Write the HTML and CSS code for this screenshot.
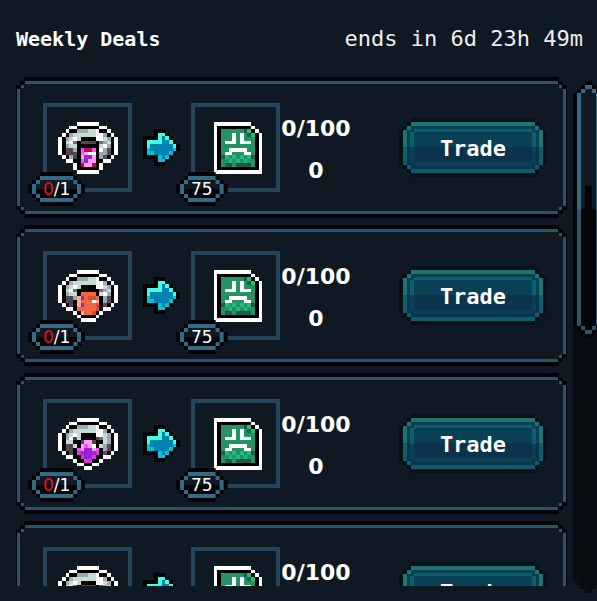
FILE: index.html
```html
<!DOCTYPE html>
<html lang="en">
<head>
<meta charset="utf-8">
<title>Weekly Deals</title>
<link rel="stylesheet" href="styles.css">
</head>
<body>
<header class="head">
  <h1 class="title">Weekly Deals</h1>
  <p class="timer">ends in 6d 23h 49m</p>
</header>
<main class="body">
  <ul class="deals" id="deals"></ul>
  <div class="track"><div class="thumb frame"></div></div>
</main>
<script src="app.js"></script>
</body>
</html>
```
FILE: styles.css
```css
:root {
  --bg: #0f1923;
  --ink: #050208;
  --line: #28556a;
  --pill: #316c82;
  --step1: polygon(4px 0, calc(100% - 4px) 0, calc(100% - 4px) 4px, 100% 4px, 100% calc(100% - 4px), calc(100% - 4px) calc(100% - 4px), calc(100% - 4px) 100%, 4px 100%, 4px calc(100% - 4px), 0 calc(100% - 4px), 0 4px, 4px 4px);
  --step2: polygon(8px 0, calc(100% - 8px) 0, calc(100% - 8px) 4px, calc(100% - 4px) 4px, calc(100% - 4px) 8px, 100% 8px, 100% calc(100% - 8px), calc(100% - 4px) calc(100% - 8px), calc(100% - 4px) calc(100% - 4px), calc(100% - 8px) calc(100% - 4px), calc(100% - 8px) 100%, 8px 100%, 8px calc(100% - 4px), 4px calc(100% - 4px), 4px calc(100% - 8px), 0 calc(100% - 8px), 0 8px, 4px 8px, 4px 4px, 8px 4px);
  --step3: polygon(12px 0, calc(100% - 12px) 0, calc(100% - 12px) 4px, calc(100% - 8px) 4px, calc(100% - 8px) 8px, calc(100% - 4px) 8px, calc(100% - 4px) 12px, 100% 12px, 100% calc(100% - 12px), calc(100% - 4px) calc(100% - 12px), calc(100% - 4px) calc(100% - 8px), calc(100% - 8px) calc(100% - 8px), calc(100% - 8px) calc(100% - 4px), calc(100% - 12px) calc(100% - 4px), calc(100% - 12px) 100%, 12px 100%, 12px calc(100% - 4px), 8px calc(100% - 4px), 8px calc(100% - 8px), 4px calc(100% - 8px), 4px calc(100% - 12px), 0 calc(100% - 12px), 0 12px, 4px 12px, 4px 8px, 8px 8px, 8px 4px, 12px 4px);
}

* { box-sizing: border-box; }

body {
  margin: 0;
  height: 100vh;
  padding-bottom: 15px;
  display: flex;
  flex-direction: column;
  overflow: hidden;
  background: var(--bg);
  color: #fff;
  font-family: "DejaVu Sans Mono", monospace;
}

.head {
  flex: none;
  height: 77px;
  padding: 0 14px 0 16px;
  display: flex;
  justify-content: space-between;
  align-items: center;
}

.title { margin: 0; font-size: 20px; }
.timer { margin: 0; font-size: 22px; color: #eee; }

.body {
  flex: 1;
  min-height: 0;
  display: flex;
  gap: 6px;
  padding-left: 16px;
}

.deals {
  flex: 1;
  min-width: 0;
  margin: 0;
  padding: 0;
  list-style: none;
  overflow: hidden;
  display: flex;
  flex-direction: column;
  gap: 7px;
}

/* Stepped frame: outline, coloured ring, fill */
.frame {
  position: relative;
  isolation: isolate;
  background: var(--ink);
  clip-path: var(--step3);
}
.frame::before,
.frame::after {
  content: "";
  position: absolute;
  z-index: -1;
}
.frame::before {
  inset: 4px;
  background: linear-gradient(var(--pill) 50%, var(--line) 50%);
  clip-path: var(--step2);
}
.frame::after {
  inset: 8px;
  background: linear-gradient(var(--bg) 50%, var(--ink) 50%);
  clip-path: var(--step1);
}

.card {
  flex: none;
  display: flex;
  align-items: center;
  padding: 26px 20px 26px 27px;
  clip-path: var(--step2);
}
.card::before { inset: 4px 1px; background: var(--line); }
.card::after { inset: 7px 4px; background: var(--bg); }

.slot {
  position: relative;
  flex: none;
  width: 89px;
  height: 89px;
  border: 4px solid #28445a;
  display: flex;
  align-items: center;
  justify-content: center;
}
.sprite { width: 60px; height: 52px; }
.arrow { flex: none; width: 37px; height: 37px; margin: 0 11px; }

.badge {
  position: absolute;
  left: -19px;
  bottom: -18px;
  height: 34px;
  padding: 0 15px;
  font-family: "DejaVu Sans", sans-serif;
  font-size: 17px;
  line-height: 34px;
}
.badge::before { background: var(--pill); }
.short { color: #f20d12; }

.stock {
  flex: none;
  min-width: 72px;
  padding-top: 4px;
  text-align: center;
  font-family: "DejaVu Sans", sans-serif;
  font-size: 22px;
  font-weight: bold;
  line-height: 42px;
}
.stock p { margin: 0; }

.trade {
  flex: none;
  width: 148px;
  height: 59px;
  margin-left: auto;
  padding: 0 11px;
  border: 0;
  background: #08111a;
  color: #fff;
  font: bold 22px "DejaVu Sans Mono", monospace;
  cursor: pointer;
}
.trade::before { background: linear-gradient(#20756a 50%, #0a5f6a 50%); }
.trade::after { background: linear-gradient(#0a4056 50%, #0b334c 50%); }
.trade span {
  display: flex;
  align-items: center;
  justify-content: center;
  height: 37px;
  padding-top: 2px;
  background:
    linear-gradient(#0a5f6a, #0a5f6a) center top / calc(100% - 8px) 3px,
    linear-gradient(#0a4056, #0a4056) center bottom / calc(100% - 8px) 4px,
    linear-gradient(#0a5f6a 50%, #0a4056 50%) left center / 4px calc(100% - 6px),
    linear-gradient(#0a5f6a 50%, #0a4056 50%) right center / 4px calc(100% - 6px);
  background-repeat: no-repeat;
}

.track {
  flex: none;
  width: 31px;
  margin: 4px -7px -7px 0;
  background: #060c12;
  clip-path: var(--step3);
}
.thumb { height: 257px; }
.thumb::after {
  background:
    linear-gradient(var(--ink), var(--ink)) center 97px / 7px 30px no-repeat,
    linear-gradient(var(--bg) 50%, var(--ink) 50%);
}
```
FILE: app.js
```javascript
const palette = {
  W: '#ffffff', K: '#000000', G: '#9aaab4', L: '#c6dcd3', D: '#4b474f', P: '#7c6679', p: '#5d4855',
  m: '#ff9cff', F: '#f653f0', R: '#c70057', V: '#9326d0', M: '#df32df',
  o: '#ef6840', O: '#d94d2c', s: '#ffaa91',
  g: '#239365', d: '#1b5c4e', l: '#20bd77',
  C: '#40ffe0', c: '#00c3da', B: '#0083b0'
};

const ringTop = [
  '.....WWWWWW.....',
  '...WWKKKKKKWW...',
  '..WKKGGGLLWKKW..',
  '.WKGLLLLLLWWGKW.',
  'WKGLWLKKKKWWLGKW'
];

const sprites = {
  ringPink: [...ringTop,
    'WKLWPKDDDDKPGLKW',
    'WKGLLKKKKKKLWGKW',
    'WKpDGKFRRFKWGpKW',
    'WKpDDKFmWWKGGpKW',
    '.WKGDKmVVmKGpKW.',
    '..WWKKFVmmKKWW..',
    '....WKRmmRKW....',
    '....WKKKKKKW....',
    '.....WWWWWW.....'],
  ringOrange: [...ringTop,
    'WKLWPKKKKKKPGLKW',
    'WKGLLKooooKLWGKW',
    'WKpDGsVoOOoKGpKW',
    'WKpDKsoooWsKGpKW',
    '.WKDKsVoooOKpKW.',
    '..WWKoooooOKWW..',
    '....WKsooOKW....',
    '.....WKKKKW.....',
    '......WWWW......'],
  ringPurple: [...ringTop,
    'WKGWDLKKKKDPLGKW',
    'WKLLKKDmmDKKLGKW',
    'WKpDLKmFmWKLGpKW',
    'WKpDKFmVVmFKGpKW',
    '.WKDKMVVVVMKpKW.',
    '..WWKKMVVMKKWW..',
    '....WKKMMKKW....',
    '.....WWKKWW.....',
    '.......WW.......'],
  token: [
    '..WWWWWWWWWW....',
    '..WKKKKKKKKKW...',
    '..WKggggggdlKW..',
    '..WKgggWgWgdlKW.',
    '..WKgggWgWgggKW.',
    '..WKgWWWgWWWgKW.',
    '..WKgggggggggKW.',
    '..WKggWWWWWggKW.',
    '..WKgWWgggWWgKW.',
    '..WKdlglglgldKW.',
    '..WKgglglglggKW.',
    '..WKgddgddddgKW.',
    '..WKKKKKKKKKKKW.',
    '..WWWWWWWWWWWWW.'],
  arrow: [
    '...KKK....',
    '...KCCK...',
    'KKKKCBCK..',
    'KCCCCBBCK.',
    'KCBBBBBBCK',
    'KcBBBBBBcK',
    'KccBBBBcK.',
    'KKKKcBcK..',
    '...KccK...',
    '...KKK....']
};

function draw(name, cls) {
  const rows = sprites[name];
  let rects = '';
  rows.forEach((row, y) => [...row].forEach((ch, x) => {
    if (ch !== '.') rects += `<rect x="${x}" y="${y}" width="1" height="1" fill="${palette[ch]}"/>`;
  }));
  return `<svg class="${cls}" viewBox="0 0 ${rows[0].length} ${rows.length}" preserveAspectRatio="none" shape-rendering="crispEdges" aria-hidden="true">${rects}</svg>`;
}

document.getElementById('deals').innerHTML = ['ringPink', 'ringOrange', 'ringPurple', 'ringPink'].map(ring => `
  <li class="card frame">
    <div class="slot">${draw(ring, 'sprite')}<span class="badge frame"><span class="short">0</span>/1</span></div>
    ${draw('arrow', 'arrow')}
    <div class="slot">${draw('token', 'sprite')}<span class="badge frame">75</span></div>
    <div class="stock"><p>0/100</p><p>0</p></div>
    <button type="button" class="trade frame"><span>Trade</span></button>
  </li>`).join('');
```
